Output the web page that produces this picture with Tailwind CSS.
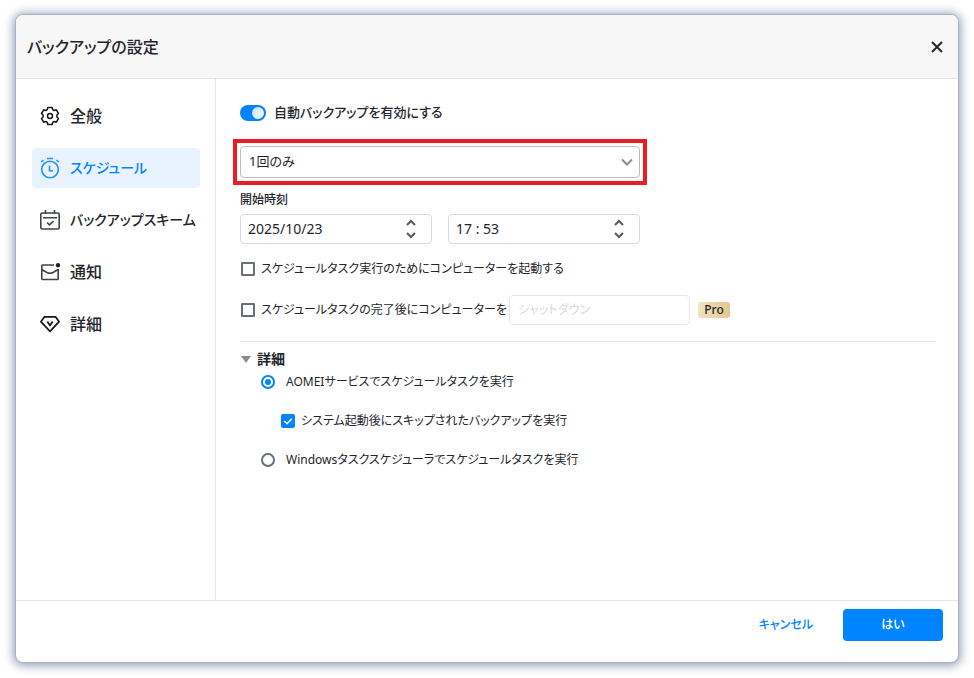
<!DOCTYPE html>
<html lang="ja">
<head>
    <meta charset="UTF-8">
    <meta name="viewport" content="width=device-width, initial-scale=1.0">
    <title>バックアップの設定</title>
    <script src="https://cdn.jsdelivr.net/npm/@tailwindcss/browser@4"></script>
</head>
<body class="bg-white min-h-screen flex flex-col px-[15px] pt-[14px] pb-[15px] font-['Noto_Sans','Noto_Sans_CJK_JP',sans-serif] [font-feature-settings:'palt'] text-xs text-[#22262b]">
    <div class="flex-1 flex flex-col rounded-lg border border-[#a9b2c3] bg-white overflow-hidden shadow-[0_1px_10px_2px_rgba(110,125,155,0.7)]">
        <!-- Header -->
        <header class="h-16 shrink-0 flex items-center justify-between pl-[11px] pr-[13px] bg-[#f7f7f7] border-b border-[#e3e3e3]">
            <h1 class="text-base font-medium">バックアップの設定</h1>
            <button type="button" aria-label="閉じる" class="p-px">
                <svg class="w-[14px] h-[14px]" viewBox="0 0 14 14" fill="none" stroke="#22282c" stroke-width="2"><path d="M2 2l10 10M12 2L2 12"/></svg>
            </button>
        </header>

        <div class="flex-1 flex">
            <!-- Sidebar -->
            <nav class="w-[200px] shrink-0 border-r border-[#e5e7ea] pl-4 pr-[15px] pt-[17px] flex flex-col gap-3 text-base font-medium">
                <a href="#" class="h-10 flex items-center gap-[10px] px-2 rounded-sm">
                    <svg class="w-5 h-5 shrink-0" viewBox="0 0 20 20" fill="none" stroke="#15181b" stroke-width="1.5" stroke-linejoin="round">
                        <path d="M7.8 1.5h4.4l.5 2.2 1.4.8 2.2-.7 2.2 3.7-1.6 1.5v2l1.6 1.5-2.2 3.7-2.2-.7-1.4.8-.5 2.2H7.8l-.5-2.2-1.4-.8-2.2.7-2.2-3.7L3.1 11V9L1.5 7.5l2.2-3.7 2.2.7 1.4-.8z"/>
                        <circle cx="10" cy="10" r="2.5"/>
                    </svg>
                    全般
                </a>
                <a href="#" aria-current="page" class="h-10 flex items-center gap-[10px] px-2 rounded-sm bg-[#e8f3ff] text-[#0084ff] text-sm">
                    <svg class="w-5 h-[22px] shrink-0" viewBox="0 0 20 22" fill="none" stroke="#2196ea" stroke-width="1.6">
                        <circle cx="10" cy="12.5" r="8.3"/>
                        <path d="M7 1.5h6M1.2 4.8l2.3-1.6M18.8 4.8l-2.3-1.6M9.5 8.8v5H13"/>
                    </svg>
                    スケジュール
                </a>
                <a href="#" class="h-10 flex items-center gap-[10px] px-2 rounded-sm whitespace-nowrap text-sm">
                    <svg class="w-5 h-5 shrink-0" viewBox="0 0 20 20" fill="none" stroke="#3f4449" stroke-width="1.6">
                        <rect x=".8" y="3" width="18.4" height="16" rx="1.5"/>
                        <path d="M5.5 0v4M14.5 0v4M3 7.8h14M7 12.5l2.5 2.3 4-3.6"/>
                    </svg>
                    バックアップスキーム
                </a>
                <a href="#" class="h-10 flex items-center gap-[10px] px-2 rounded-sm">
                    <svg class="w-5 h-5 shrink-0" viewBox="0 0 20 20" fill="none" stroke="#3f4449" stroke-width="1.6" stroke-linejoin="round">
                        <path d="M14 3H2.5q-.7 0-.7.7v13.1q0 .7.7.7h15q.7 0 .7-.7V7M1.8 7.5L7 10.5q3 1.5 6 0l5.2-3"/>
                        <circle cx="18" cy="3.2" r="2.2" fill="#22262b" stroke="none"/>
                    </svg>
                    通知
                </a>
                <a href="#" class="h-10 flex items-center gap-[10px] px-2 rounded-sm">
                    <svg class="w-5 h-5 shrink-0" viewBox="0 0 20 20" fill="none" stroke="#15181b" stroke-width="1.7" stroke-linejoin="round">
                        <path d="M4.5 2.8h11l3.6 4.9L10 17.4.9 7.7z"/>
                        <path d="M7.3 7.5L10 11.5l2.7-4"/>
                    </svg>
                    詳細
                </a>
            </nav>

            <!-- Schedule settings -->
            <main class="flex-1 flex flex-col pl-6 pr-[22px] pt-6 pb-6">
                <label class="h-5 flex items-center gap-2 text-[13px] font-medium">
                    <input type="checkbox" role="switch" checked class="appearance-none w-[26px] h-4 rounded-full bg-[#0084ff] flex items-center justify-end px-[2px] before:w-3 before:h-3 before:rounded-full before:bg-linear-to-br before:from-[#c3e0ff] before:to-white">
                    自動バックアップを有効にする
                </label>

                <div class="relative mt-[23px] w-[400px] outline-4 outline-offset-[3px] outline-[#ed1c24]">
                    <select aria-label="実行頻度" class="appearance-none block w-full h-8 px-2 rounded-sm border border-[#b9bec6] bg-white text-[13px]">
                        <option>1回のみ</option>
                    </select>
                    <svg class="absolute right-[6px] top-[10px] w-[14px] h-3 pointer-events-none" viewBox="0 0 14 12" fill="none" stroke="#838a93" stroke-width="2"><path d="M2 3.5l5 5 5-5"/></svg>
                </div>

                <label for="startDate" class="mt-3 h-5 leading-5 font-medium">開始時刻</label>
                <div class="mt-1 flex gap-4 text-sm">
                    <div class="w-48 h-[30px] flex items-center rounded-sm border border-[#d5dae1] pl-[7px] pr-[14px]">
                        <input type="text" id="startDate" value="2025/10/23" class="flex-1 min-w-0 outline-none">
                        <div class="flex flex-col gap-1">
                            <button type="button" aria-label="日付を進める"><svg class="w-3 h-2" viewBox="0 0 12 8" fill="none" stroke="#555b62" stroke-width="2"><path d="M2 6l4-4 4 4"/></svg></button>
                            <button type="button" aria-label="日付を戻す"><svg class="w-3 h-2" viewBox="0 0 12 8" fill="none" stroke="#555b62" stroke-width="2"><path d="M2 2l4 4 4-4"/></svg></button>
                        </div>
                    </div>
                    <div class="w-48 h-[30px] flex items-center rounded-sm border border-[#d5dae1] pl-[7px] pr-[14px]">
                        <input type="text" aria-label="時刻" value="17 : 53" class="flex-1 min-w-0 outline-none">
                        <div class="flex flex-col gap-1">
                            <button type="button" aria-label="時刻を進める"><svg class="w-3 h-2" viewBox="0 0 12 8" fill="none" stroke="#555b62" stroke-width="2"><path d="M2 6l4-4 4 4"/></svg></button>
                            <button type="button" aria-label="時刻を戻す"><svg class="w-3 h-2" viewBox="0 0 12 8" fill="none" stroke="#555b62" stroke-width="2"><path d="M2 2l4 4 4-4"/></svg></button>
                        </div>
                    </div>
                </div>

                <label class="mt-[15px] h-5 flex items-center gap-[6px] pl-px">
                    <input type="checkbox" class="appearance-none w-[14px] h-[14px] rounded-[1px] border-2 border-[#6a7078] bg-white">
                    スケジュールタスク実行のためにコンピューターを起動する
                </label>

                <div class="mt-4 flex items-center gap-2">
                    <label class="w-[261px] h-5 flex items-center gap-[6px] pl-px whitespace-nowrap">
                        <input type="checkbox" class="appearance-none shrink-0 w-[14px] h-[14px] rounded-[1px] border-2 border-[#6a7078] bg-white">
                        スケジュールタスクの完了後にコンピューターを
                    </label>
                    <select disabled aria-label="完了後の動作" class="appearance-none w-[181px] h-[30px] px-2 rounded-sm border border-[#e4e6e9] bg-white text-[#d5dae3] opacity-100">
                        <option>シャットダウン</option>
                    </select>
                    <span class="w-8 h-4 leading-4 rounded-[3px] bg-linear-to-r from-[#f0e4c3] to-[#e3c88f] text-center font-medium">Pro</span>
                </div>

                <!-- Advanced -->
                <details open class="mt-4 pt-[7px] border-t border-[#e5e7ea]">
                    <summary class="list-none h-5 flex items-center gap-[6px] pl-px text-sm font-bold">
                        <svg class="w-[10px] h-[7px]" viewBox="0 0 10 7" fill="#868c95"><path d="M0 0h10L5 7z"/></svg>
                        詳細
                    </summary>
                    <div class="mt-[3px] pl-[21px] flex flex-col gap-[19px]">
                        <label class="h-5 flex items-center gap-[11px]">
                            <input type="radio" name="runner" checked class="appearance-none w-[14px] h-[14px] rounded-full border-2 border-[#6a7078] checked:border-[#0084ff] grid place-items-center checked:before:w-[6px] checked:before:h-[6px] checked:before:rounded-full checked:before:bg-[#0084ff]">
                            AOMEIサービスでスケジュールタスクを実行
                        </label>
                        <label class="h-5 flex items-center gap-[6px] pl-5">
                            <span class="grid">
                                <input type="checkbox" checked class="[grid-area:1/1] appearance-none w-[14px] h-[14px] rounded-xs checked:bg-[#0084ff]">
                                <svg class="[grid-area:1/1] w-[14px] h-[14px] pointer-events-none" viewBox="0 0 14 14" fill="none" stroke="#fff" stroke-width="1.6"><path d="M3.2 7L6 9.7l4.800-5"/></svg>
                            </span>
                            システム起動後にスキップされたバックアップを実行
                        </label>
                        <label class="h-5 flex items-center gap-[11px]">
                            <input type="radio" name="runner" class="appearance-none w-[14px] h-[14px] rounded-full border-2 border-[#6a7078] checked:border-[#0084ff]">
                            Windowsタスクスケジューラでスケジュールタスクを実行
                        </label>
                    </div>
                </details>
            </main>
        </div>

        <!-- Footer -->
        <footer class="flex items-center justify-end gap-[30px] pt-2 pb-[21px] pr-[15px] border-t border-[#e5e7ea]">
            <button type="button" class="h-8 text-[#0084ff] font-medium">キャンセル</button>
            <button type="button" class="w-[100px] h-8 rounded-sm bg-[#0084ff] text-white font-medium">はい</button>
        </footer>
    </div>
</body>
</html>
